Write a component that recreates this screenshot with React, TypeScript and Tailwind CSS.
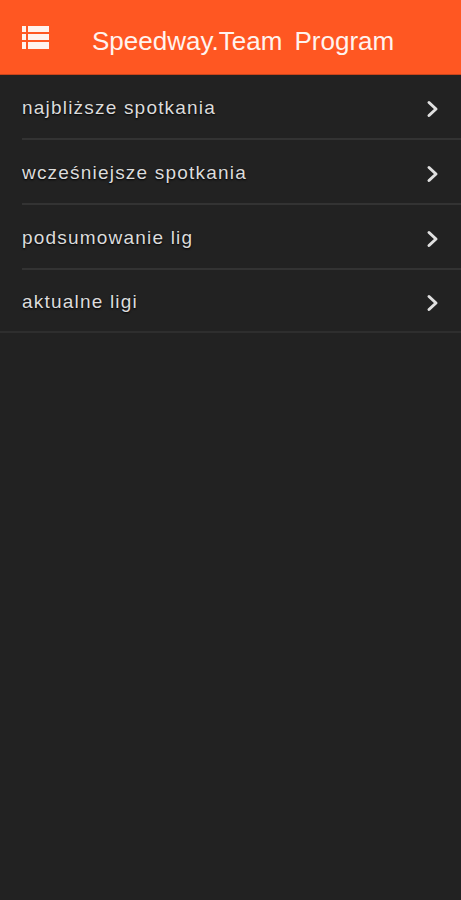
const items = [
	"najbliższe spotkania",
	"wcześniejsze spotkania",
	"podsumowanie lig",
	"aktualne ligi",
];

const MenuIcon = () => (
	<svg width="27" height="23" viewBox="0 0 27 23" fill="#fff3ee">
		<rect x="0" y="0" width="4" height="6" />
		<rect x="6" y="0" width="21" height="6" />
		<rect x="0" y="8" width="4" height="6" />
		<rect x="6" y="8" width="21" height="6" />
		<rect x="0" y="16" width="4" height="7" />
		<rect x="6" y="16" width="21" height="7" />
	</svg>
);

const Chevron = () => (
	<svg width="14" height="18" viewBox="0 0 14 18" fill="none">
		<path
			d="M3 2.5 L10 9 L3 15.5"
			stroke="#e0e0e0"
			strokeWidth="3"
			strokeLinecap="round"
			strokeLinejoin="round"
		/>
	</svg>
);

export default function App() {
	return (
		<div
			className="min-h-[900px] bg-[#222222]"
			style={{ fontFamily: '"Liberation Sans", Arial, sans-serif' }}
		>
			<header className="h-[75px] bg-[#ff5722] border-b border-[#c9451c] flex items-center">
				<div className="pl-[22px] pt-[1px]">
					<MenuIcon />
				</div>
				<h1 className="ml-[43px] pt-[8px] text-[26px] text-[#fff3ee] [word-spacing:5px]">
					Speedway.Team Program
				</h1>
			</header>
			<ul>
				{items.map((label, i) => (
					<li
						key={label}
						className={
							i === items.length - 1
								? "border-b-2 border-[#2e2e2e]"
								: "pl-[22px]"
						}
					>
						<div
							className={
								i === items.length - 1
									? "pl-[22px] pt-[4px] h-[61px] flex items-center justify-between pr-[21px]"
									: "pt-[4px] h-[65px] flex items-center justify-between pr-[21px] border-b-2 border-[#333333]"
							}
						>
							<span className="text-[19px] tracking-[1.2px] text-[#dcdcdc] [text-shadow:0_1px_2px_#000]">
								{label}
							</span>
							<Chevron />
						</div>
					</li>
				))}
			</ul>
		</div>
	);
}
